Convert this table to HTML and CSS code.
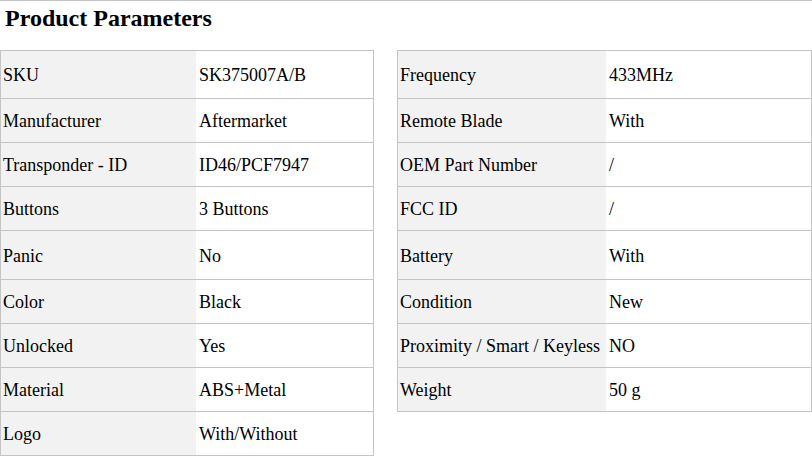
FILE: index.html
```html
<!DOCTYPE html>
<html>
<head>
<meta charset="utf-8">
<link rel="stylesheet" href="styles.css">
</head>
<body>
<div class="page">
  <h2 class="title">Product Parameters</h2>
  <div class="tables">
    <div class="ptable left">
      <div class="row first"><div class="k">SKU</div><div class="v">SK375007A/B</div></div>
      <div class="row"><div class="k">Manufacturer</div><div class="v">Aftermarket</div></div>
      <div class="row"><div class="k">Transponder - ID</div><div class="v">ID46/PCF7947</div></div>
      <div class="row"><div class="k">Buttons</div><div class="v">3 Buttons</div></div>
      <div class="row tall"><div class="k">Panic</div><div class="v">No</div></div>
      <div class="row"><div class="k">Color</div><div class="v">Black</div></div>
      <div class="row"><div class="k">Unlocked</div><div class="v">Yes</div></div>
      <div class="row"><div class="k">Material</div><div class="v">ABS+Metal</div></div>
      <div class="row"><div class="k">Logo</div><div class="v">With/Without</div></div>
    </div>
    <div class="ptable right">
      <div class="row first"><div class="k">Frequency</div><div class="v">433MHz</div></div>
      <div class="row"><div class="k">Remote Blade</div><div class="v">With</div></div>
      <div class="row"><div class="k">OEM Part Number</div><div class="v">/</div></div>
      <div class="row"><div class="k">FCC ID</div><div class="v">/</div></div>
      <div class="row tall"><div class="k">Battery</div><div class="v">With</div></div>
      <div class="row"><div class="k">Condition</div><div class="v">New</div></div>
      <div class="row"><div class="k">Proximity / Smart / Keyless</div><div class="v">NO</div></div>
      <div class="row"><div class="k">Weight</div><div class="v">50 g</div></div>
    </div>
  </div>
</div>
</body>
</html>
```
FILE: styles.css
```css
html, body {
  margin: 0;
  padding: 0;
  background: #fff;
}
body {
  font-family: "Liberation Serif", "Times New Roman", serif;
  font-size: 18px;
  color: #000;
}
.page {
  width: 812px;
  height: 456px;
  border-top: 1px solid #c4c4c4;
  box-sizing: border-box;
  overflow: hidden;
}
.title {
  margin: 0;
  padding: 3px 0 0 5px;
  height: 45px;
  box-sizing: border-box;
  font-size: 24px;
  font-weight: bold;
  line-height: 28px;
}
.tables {
  display: flex;
  align-items: flex-start;
  gap: 23px;
  margin-top: 4px;
}
.ptable {
  border: 1px solid #c4c4c4;
  border-bottom: none;
  display: flex;
  flex-direction: column;
}
.left { width: 374px; box-sizing: border-box; }
.right { width: 415px; box-sizing: border-box; }
.row {
  display: grid;
  height: 44px;
  border-bottom: 1px solid #c4c4c4;
  box-sizing: border-box;
}
.row.first { height: 48px; }
.row.tall { height: 49px; }
.left .row { grid-template-columns: 195px 1fr; }
.right .row { grid-template-columns: 208px 1fr; }
.k, .v {
  display: flex;
  align-items: center;
  padding-top: 2px;
  white-space: nowrap;
}
.k { background: #f2f2f2; padding-left: 2px; }
.v { background: #fff; padding-left: 3px; }
```
